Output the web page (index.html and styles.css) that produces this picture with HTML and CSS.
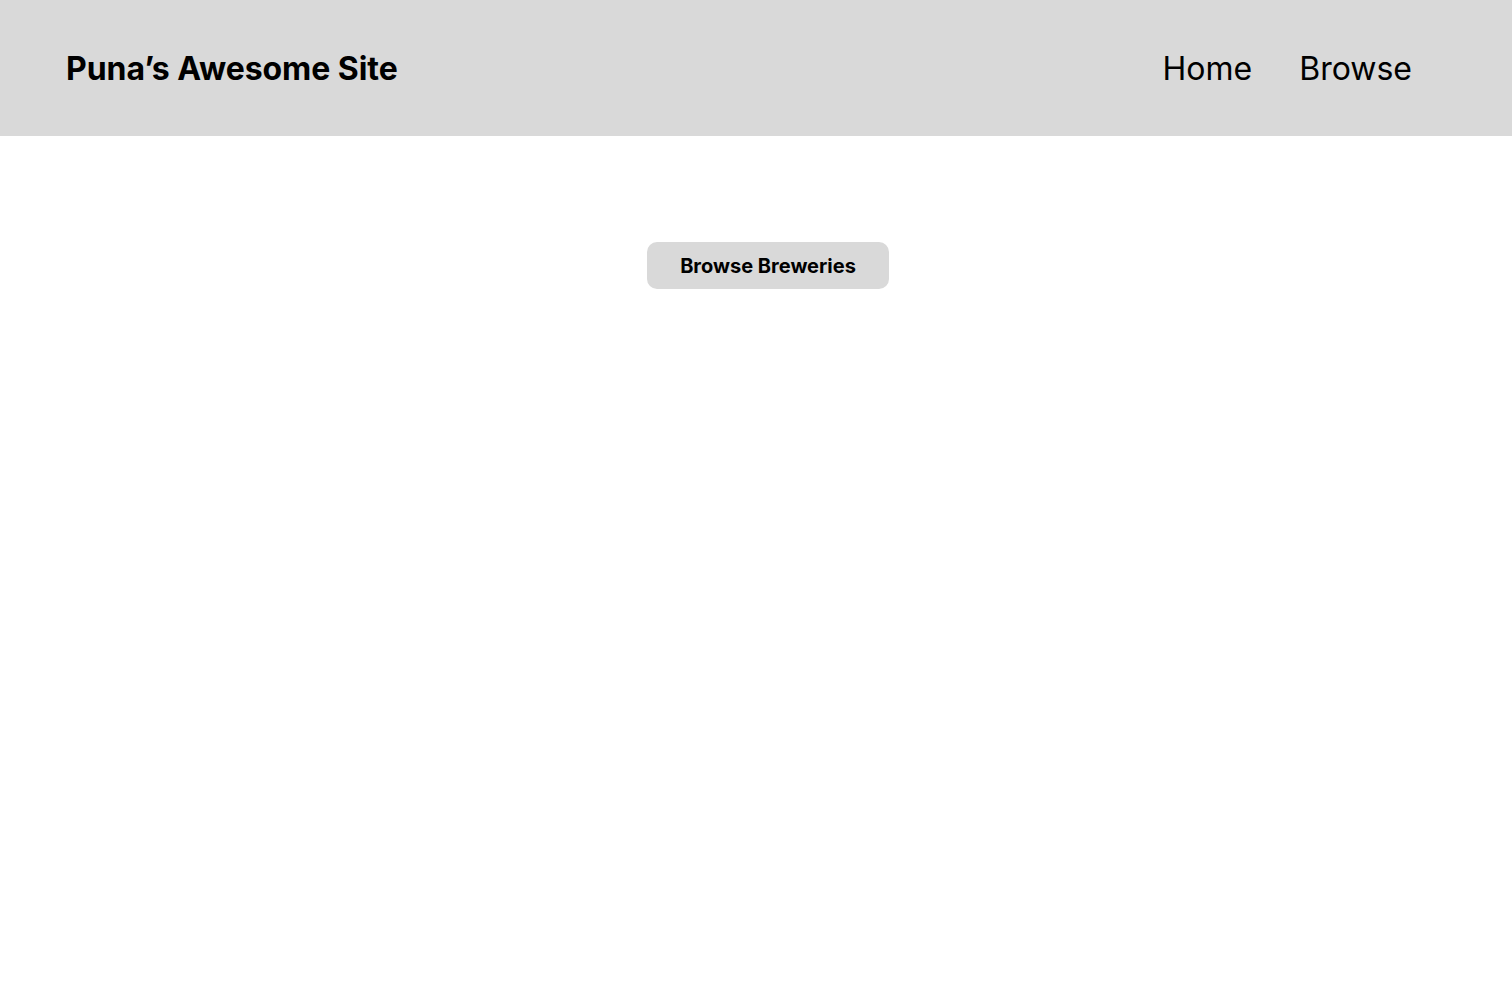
FILE: index.html
```html
<!DOCTYPE html>
<html lang="en">
<head>
  <meta charset="UTF-8" />
  <meta name="viewport" content="width=device-width, initial-scale=1.0"/>
  <title>Puna's Awesome Site</title>
  <link rel="stylesheet" href="styles.css">
</head>
<body>
  <header class="header">
    <div class="site-title">Puna’s Awesome Site</div>
    <nav class="nav">
      <a href="#">Home</a>
      <a href="#">Browse</a>
    </nav>
  </header>

  <main class="main">
    <button class="btn">Browse Breweries</button>
  </main>
</body>
</html>
```

FILE: styles.css
```css
body {
  margin: 0;
  font-family: Inter, "Noto Sans", sans-serif;
  background: #ffffff;
  color: #000;
}
.header {
  display: flex;
  align-items: center;
  justify-content: space-between;
  height: 136px;
  padding: 0 100px 0 66px;
  background-color: #d9d9d9;
}
.site-title {
  font-size: 32px;
  font-weight: bold;
  letter-spacing: -0.05px;
}
.nav {
  display: flex;
  gap: 47px;
}
.nav a {
  font-size: 32px;
  color: #000;
  text-decoration: none;
}
.main {
  display: flex;
  justify-content: center;
  padding: 106px 0 0 24px;
}
.btn {
  background-color: #d9d9d9;
  color: #000;
  font-family: Inter, "Noto Sans", sans-serif;
  font-size: 20px;
  font-weight: bold;
  line-height: 23px;
  padding: 13px 33px 11px;
  border: none;
  border-radius: 10px;
}
```
